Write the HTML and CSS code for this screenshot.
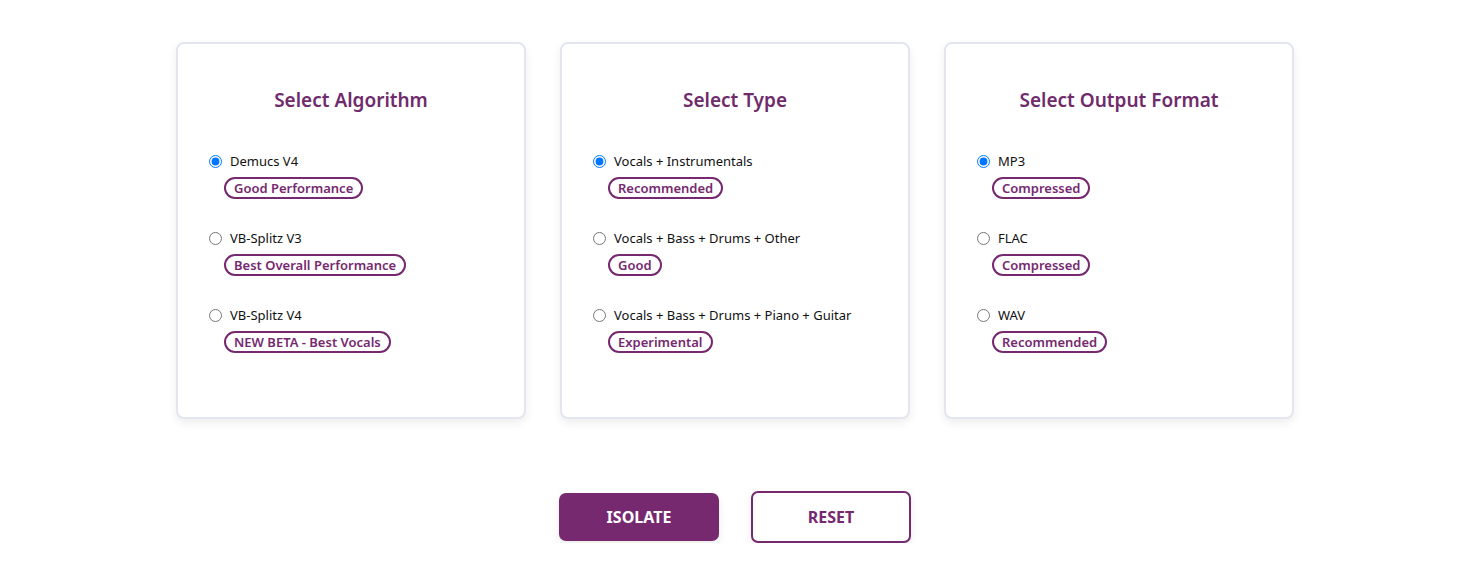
FILE: index.html
```html
<!DOCTYPE html>
<html>
<head>
<meta charset="utf-8">
<link rel="stylesheet" href="styles.css">
</head>
<body>
<main class="page">
  <section class="cards">
    <div class="card">
      <h2 class="card-title">Select Algorithm</h2>
      <div class="options">
        <div class="option">
          <label class="option-row"><input type="radio" name="alg" checked><span>Demucs V4</span></label>
          <span class="badge">Good Performance</span>
        </div>
        <div class="option">
          <label class="option-row"><input type="radio" name="alg"><span>VB-Splitz V3</span></label>
          <span class="badge">Best Overall Performance</span>
        </div>
        <div class="option">
          <label class="option-row"><input type="radio" name="alg"><span>VB-Splitz V4</span></label>
          <span class="badge">NEW BETA - Best Vocals</span>
        </div>
      </div>
    </div>
    <div class="card">
      <h2 class="card-title">Select Type</h2>
      <div class="options">
        <div class="option">
          <label class="option-row"><input type="radio" name="type" checked><span>Vocals + Instrumentals</span></label>
          <span class="badge">Recommended</span>
        </div>
        <div class="option">
          <label class="option-row"><input type="radio" name="type"><span>Vocals + Bass + Drums + Other</span></label>
          <span class="badge">Good</span>
        </div>
        <div class="option">
          <label class="option-row"><input type="radio" name="type"><span>Vocals + Bass + Drums + Piano + Guitar</span></label>
          <span class="badge">Experimental</span>
        </div>
      </div>
    </div>
    <div class="card">
      <h2 class="card-title">Select Output Format</h2>
      <div class="options">
        <div class="option">
          <label class="option-row"><input type="radio" name="fmt" checked><span>MP3</span></label>
          <span class="badge">Compressed</span>
        </div>
        <div class="option">
          <label class="option-row"><input type="radio" name="fmt"><span>FLAC</span></label>
          <span class="badge">Compressed</span>
        </div>
        <div class="option">
          <label class="option-row"><input type="radio" name="fmt"><span>WAV</span></label>
          <span class="badge">Recommended</span>
        </div>
      </div>
    </div>
  </section>
  <div class="actions">
    <button class="btn btn-primary">ISOLATE</button>
    <button class="btn btn-outline">RESET</button>
  </div>
</main>
</body>
</html>
```

FILE: styles.css
```css
* { box-sizing: border-box; }
html, body { margin: 0; padding: 0; background: #fff; }
body {
  font-family: "Noto Sans", "Open Sans", sans-serif;
  color: #1a1a1a;
}
.page {
  padding-top: 42px;
  padding-right: 1px;
  display: flex;
  flex-direction: column;
  align-items: center;
}
.cards {
  display: flex;
  gap: 34px;
}
.card {
  width: 350px;
  height: 377px;
  border: 2px solid #e3e6f0;
  border-radius: 8px;
  background: #fff;
  box-shadow: 0 4px 10px rgba(0, 0, 0, 0.07);
  padding: 42px 0 0 31px;
}
.card-title {
  margin: 0 31px 0 0;
  text-align: center;
  font-size: 19px;
  line-height: 28px;
  font-weight: 600;
  color: #6f2b6b;
}
.options {
  margin-top: 37px;
  display: flex;
  flex-direction: column;
  gap: 29px;
}
.option {
  display: flex;
  flex-direction: column;
  align-items: flex-start;
  gap: 6px;
}
.option-row {
  display: flex;
  align-items: center;
  gap: 8px;
  font-size: 13px;
  line-height: 20px;
  color: #111;
}
.option-row input {
  margin: 0;
  width: 13px;
  height: 13px;
}
.badge {
  margin-left: 15px;
  display: inline-block;
  border: 2px solid #76296f;
  border-radius: 12px;
  padding: 0 8px;
  height: 22px;
  line-height: 18px;
  font-size: 13px;
  font-weight: 600;
  color: #76296f;
}
.actions {
  margin-top: 72px;
  display: flex;
  align-items: center;
  gap: 32px;
}
.btn {
  width: 160px;
  font-family: "Noto Sans", "Open Sans", sans-serif;
  font-size: 16px;
  font-weight: 700;
  border-radius: 7px;
  cursor: pointer;
  box-shadow: 0 4px 10px rgba(0, 0, 0, 0.08);
}
.btn-primary {
  height: 48px;
  background: #76296f;
  color: #fff;
  border: none;
}
.btn-outline {
  height: 52px;
  background: #fff;
  color: #76296f;
  border: 2px solid #76296f;
}
```
